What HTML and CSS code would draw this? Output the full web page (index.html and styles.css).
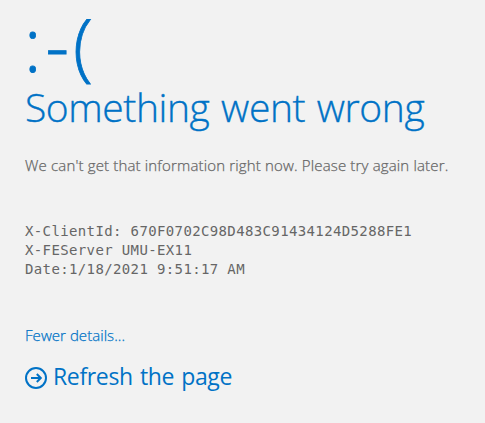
FILE: index.html
```html
<!DOCTYPE html>
<html lang="en">
<head>
<meta charset="utf-8">
<title>Something went wrong</title>
<link rel="stylesheet" href="styles.css">
</head>
<body>
<main class="error">
<div class="face">:-(</div>
<h1 class="title">Something went wrong</h1>
<p class="message">We can't get that information right now. Please try again later.</p>
<div class="details">
<div>X-ClientId: 670F0702C98D483C91434124D5288FE1</div>
<div>X-FEServer UMU-EX11</div>
<div>Date:1/18/2021 9:51:17 AM</div>
</div>
<a class="toggle">Fewer details...</a>
<a class="refresh">
<svg class="icon" viewBox="0 0 22 22"><circle cx="11" cy="11" r="10"/><path d="M6 11h10M11.8 7l4 4-4 4"/></svg>
<span>Refresh the page</span>
</a>
</main>
</body>
</html>
```
FILE: styles.css
```css
body { margin: 0; background: #f2f2f2; color: #666; font-family: "Segoe UI", "Open Sans", sans-serif; }
.error { padding: 4px 0 0 24px; white-space: nowrap; }
.face { height: 79px; line-height: 79px; font-size: 73px; font-weight: 300; letter-spacing: 4.1px; -webkit-text-stroke: 0.8px; color: #0072c6; }
.title { margin: 0; height: 48px; line-height: 48px; font-size: 39px; font-weight: 300; letter-spacing: -0.42px; word-spacing: 2px; -webkit-text-stroke: 0.35px; color: #0072c6; padding-left: 1px; }
.message { margin: 24px 0 0 1px; height: 20px; line-height: 20px; font-size: 15px; font-weight: 300; letter-spacing: 0.16px; -webkit-text-stroke: 0.25px; }
.details { margin: 47px 0 0 1px; font-family: "DejaVu Sans Mono", monospace; font-size: 14px; letter-spacing: 0.37px; line-height: 19px; }
.toggle { display: block; margin: 46px 0 0 1px; height: 20px; line-height: 20px; font-size: 15px; font-weight: 300; letter-spacing: 0.05px; -webkit-text-stroke: 0.25px; color: #0072c6; }
.refresh { display: flex; align-items: center; gap: 6px; margin: 18px 0 0 1px; height: 30px; line-height: 30px; font-size: 23px; letter-spacing: -0.35px; word-spacing: 1.5px; color: #0072c6; }
.refresh span { margin-top: -4px; }
.icon { width: 22px; height: 22px; fill: none; stroke: currentColor; stroke-width: 2; }
```
